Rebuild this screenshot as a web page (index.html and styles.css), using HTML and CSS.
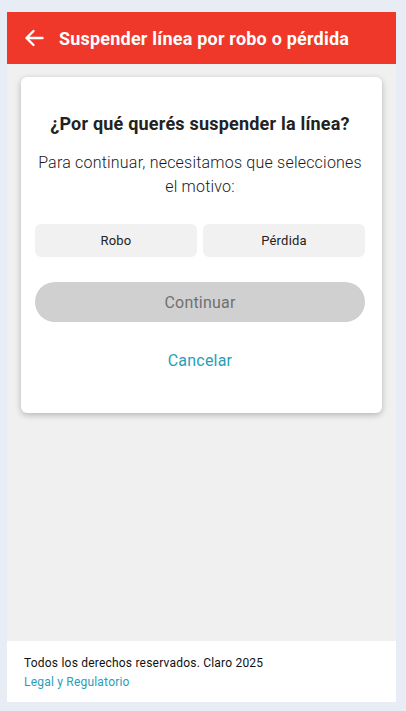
FILE: index.html
```html
<!DOCTYPE html>
<html lang="es">
<head>
  <meta charset="UTF-8" />
  <meta name="viewport" content="width=device-width, initial-scale=1.0"/>
  <title>Suspender línea</title>
  <link rel="stylesheet" href="styles.css">
</head>
<body>
  <div class="frame">
    <header class="topbar">
      <svg class="back" width="24" height="24" viewBox="0 0 24 24">
        <path d="M20.5 12H4.5M11.5 5L4.5 12l7 7" fill="none" stroke="#fff" stroke-width="2.4" stroke-linecap="round" stroke-linejoin="round"/>
      </svg>
      <h1>Suspender línea por robo o pérdida</h1>
    </header>

    <main class="content">
      <div class="card">
        <h2>¿Por qué querés suspender la línea?</h2>
        <p class="lead">Para continuar, necesitamos que selecciones el motivo:</p>
        <div class="options">
          <button class="option">Robo</button>
          <button class="option">Pérdida</button>
        </div>
        <button class="primary" disabled>Continuar</button>
        <a class="cancel" href="#">Cancelar</a>
      </div>
    </main>

    <footer class="footer">
      <p>Todos los derechos reservados. Claro 2025</p>
      <a href="#">Legal y Regulatorio</a>
    </footer>
  </div>
</body>
</html>
```

FILE: styles.css
```css
body {
  margin: 0;
  background: #e8ecf4;
  font-family: Roboto, "Liberation Sans", sans-serif;
  letter-spacing: 0.013em;
  padding: 12px 10px 9px 7px;
}

.frame {
  display: flex;
  flex-direction: column;
  height: 690px;
}

.topbar {
  height: 52px;
  background: #ef3829;
  display: flex;
  align-items: center;
  padding-left: 15px;
  gap: 13px;
}

.topbar h1 {
  margin: 0;
  color: #fff;
  font-size: 18px;
  font-weight: 700;
}

.content {
  flex: 1;
  background: #f0f0f0;
  padding: 13px 14px;
}

.card {
  background: #fff;
  border-radius: 6px;
  box-shadow: 0 2px 6px rgba(0, 0, 0, 0.25);
  padding: 35px 17px 40px 14px;
  display: flex;
  flex-direction: column;
  align-items: center;
  text-align: center;
}

.card h2 {
  margin: 0;
  font-size: 18px;
  line-height: 24px;
  font-weight: 700;
  color: #222;
}

.lead {
  margin: 15px 0 0;
  font-size: 16px;
  line-height: 24px;
  font-weight: 300;
  color: #1a1a1a;
}

.options {
  display: flex;
  gap: 6px;
  width: 100%;
  margin-top: 25px;
}

.option {
  flex: 1;
  height: 33px;
  border: none;
  border-radius: 6px;
  background: #f1f1f1;
  font-family: inherit;
  letter-spacing: inherit;
  font-size: 13px;
  color: #222;
}

.primary {
  width: 100%;
  height: 40px;
  margin-top: 25px;
  border: none;
  border-radius: 20px;
  background: #d0d0d0;
  color: #707070;
  font-family: inherit;
  letter-spacing: inherit;
  font-size: 16px;
}

.cancel {
  margin-top: 27px;
  font-size: 16px;
  line-height: 24px;
  color: #2a9db8;
  text-decoration: none;
}

.footer {
  height: 61px;
  box-sizing: border-box;
  background: #fff;
  padding: 13px 17px 0;
  font-size: 12px;
  line-height: 19px;
}

.footer p {
  margin: 0;
  color: #111;
}

.footer a {
  color: #2a9db8;
  text-decoration: none;
}
```
